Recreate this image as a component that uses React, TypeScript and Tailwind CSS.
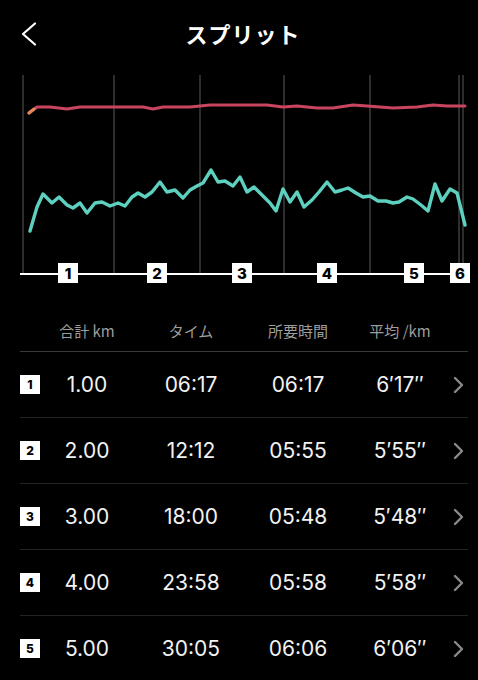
const splits = [
  { n: 1, total: '1.00', time: '06:17', lap: '06:17', pace: '6′17″' },
  { n: 2, total: '2.00', time: '12:12', lap: '05:55', pace: '5′55″' },
  { n: 3, total: '3.00', time: '18:00', lap: '05:48', pace: '5′48″' },
  { n: 4, total: '4.00', time: '23:58', lap: '05:58', pace: '5′58″' },
  { n: 5, total: '5.00', time: '30:05', lap: '06:06', pace: '6′06″' },
];

const heartRate = [
  [37, 107], [50, 107], [67, 109], [80, 107], [100, 107], [133, 107], [143, 107],
  [153, 109], [163, 107], [190, 107], [210, 105], [267, 105], [283, 107], [297, 106],
  [317, 108], [333, 108], [353, 105], [367, 106], [393, 108], [417, 107], [433, 105],
  [447, 106], [465, 106],
];

const pace = [
  [30, 231], [37, 207], [43, 194], [52, 203], [59, 197], [67, 205], [73, 208], [80, 203],
  [87, 213], [95, 203], [102, 202], [110, 206], [118, 203], [125, 206], [132, 197],
  [138, 193], [145, 197], [152, 192], [160, 182], [167, 192], [175, 190], [183, 198],
  [190, 190], [197, 186], [203, 183], [211, 170], [218, 182], [225, 181], [233, 186],
  [240, 177], [247, 192], [254, 187], [262, 195], [270, 203], [276, 211], [283, 189],
  [290, 202], [297, 192], [304, 207], [312, 200], [319, 192], [327, 182], [335, 192],
  [342, 190], [348, 188], [356, 193], [363, 197], [370, 196], [378, 201], [386, 201],
  [393, 203], [399, 202], [407, 197], [413, 199], [421, 205], [428, 211], [435, 184],
  [442, 201], [450, 189], [457, 193], [465, 225],
];

const gridX = [23, 114, 200, 284, 370, 459, 463];
const markers = [68, 157, 242, 327, 414, 460];

const toPoints = (pts: number[][]) => pts.map(([x, y]) => `${x},${y}`).join(' ');

function SplitChart() {
  return (
    <svg className="block" width={478} height={224} viewBox="0 66 478 224">
      {gridX.map((x) => (
        <line key={x} x1={x} y1={75} x2={x} y2={273} stroke="#5a5a5a" strokeWidth={1} />
      ))}
      <polyline
        points={`29,113 ${toPoints(heartRate)}`}
        fill="none"
        stroke="#c9455f"
        strokeWidth={3}
        strokeLinejoin="round"
        strokeLinecap="round"
      />
      <line x1={29} y1={113} x2={34} y2={109} stroke="#e08a55" strokeWidth={3} strokeLinecap="round" />
      <polyline
        points={toPoints(pace)}
        fill="none"
        stroke="#5ed0bf"
        strokeWidth={3.4}
        strokeLinejoin="round"
        strokeLinecap="round"
      />
      <line x1={20} y1={274} x2={467} y2={274} stroke="#ffffff" strokeWidth={2} />
      {markers.map((x, i) => (
        <g key={x}>
          <rect x={x - 10} y={263} width={20} height={20} fill="#ffffff" />
          <text
            x={x}
            y={279}
            textAnchor="middle"
            fontSize={15}
            fontWeight={800}
            fill="#000000"
            fontFamily="Inter, 'Liberation Sans', sans-serif"
          >
            {i + 1}
          </text>
        </g>
      ))}
    </svg>
  );
}

function RowChevron() {
  return (
    <svg className="shrink-0" width={12} height={18} viewBox="0 0 12 18">
      <path d="M3 2 L10 9 L3 16" fill="none" stroke="#8a8a8a" strokeWidth={2.4} strokeLinecap="round" strokeLinejoin="round" />
    </svg>
  );
}

export default function App() {
  return (
    <div className="w-[478px] h-[680px] overflow-hidden bg-black text-white font-['Inter','Noto_Sans_CJK_JP',sans-serif]">
      <header className="relative h-[66px] flex items-center justify-center">
        <svg className="absolute left-[20px] top-[22px]" width={18} height={24} viewBox="0 0 18 24">
          <path d="M15 1.5 L3 12 L15 22.5" fill="none" stroke="#ffffff" strokeWidth={2.2} strokeLinecap="round" strokeLinejoin="round" />
        </svg>
        <h1 className="pl-[8px] text-[22px] font-bold tracking-[1px] font-['Noto_Sans_CJK_JP',sans-serif]">スプリット</h1>
      </header>

      <SplitChart />

      <div className="pl-[20px] pr-[10px]">
        <div className="flex h-[62px] items-end pb-[9px] border-b border-[#3a3a3a] text-[15px] text-[#9d9d9d] font-['Noto_Sans_CJK_JP',sans-serif]">
          <div className="w-[20px] shrink-0" />
          <div className="w-[94px] shrink-0 text-center">合計 km</div>
          <div className="w-[114px] shrink-0 text-center">タイム</div>
          <div className="w-[100px] shrink-0 text-center">所要時間</div>
          <div className="w-[104px] shrink-0 text-center">平均 /km</div>
        </div>

        {splits.map((s) => (
          <div key={s.n} className="flex h-[66px] items-center border-b border-[#242424] text-[21px] text-[#f2f2f2]">
            <div className="w-[20px] h-[19px] shrink-0 bg-white text-black text-[12px] font-extrabold flex items-center justify-center">
              {s.n}
            </div>
            <div className="w-[94px] shrink-0 text-center">{s.total}</div>
            <div className="w-[114px] shrink-0 text-center">{s.time}</div>
            <div className="w-[100px] shrink-0 text-center">{s.lap}</div>
            <div className="w-[104px] shrink-0 text-center">{s.pace}</div>
            <RowChevron />
          </div>
        ))}
      </div>
    </div>
  );
}
